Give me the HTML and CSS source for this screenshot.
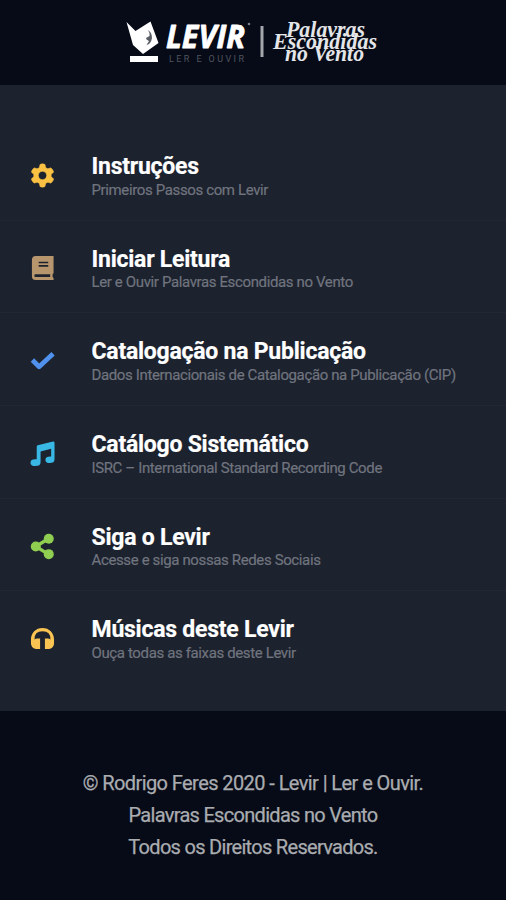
FILE: index.html
```html
<!DOCTYPE html>
<html lang="pt-BR">
<head>
<meta charset="utf-8">
<title>Levir – Palavras Escondidas no Vento</title>
<link rel="stylesheet" href="styles.css">
</head>
<body>
<header class="header">
  <svg class="brand" width="254" height="48" viewBox="126 18 254 48">
    <path fill="#fff" d="M126.500 22L135.500 31L150.500 21.500L158.500 43L143 54L133 45Z"/>
    <path d="M147.500 30Q152 32 152 38Q151 44 146.500 45L149 41Q146 40 146 38L149.500 36Q150 32 147.500 30Z" fill="#5a5e66"/>
    <path fill="#fff" d="M130 56H158V62H130Z"/>
    <text class="brand-name" x="166" y="48" textLength="79" lengthAdjust="spacingAndGlyphs">LEVIR</text>
    <circle cx="249" cy="24" r="1.300" fill="#777b83"/>
    <text class="brand-tag" x="169" y="61.500" textLength="75">LER E OUVIR</text>
    <path fill="#a5a7ac" d="M260.500 26H263.500V57H260.500Z"/>
    <g class="book-title">
      <text x="286" y="37" textLength="79" lengthAdjust="spacingAndGlyphs">Palavras</text>
      <text x="273" y="49" textLength="104" lengthAdjust="spacingAndGlyphs">Escondidas</text>
      <text x="285" y="61" textLength="79" lengthAdjust="spacingAndGlyphs">no Vento</text>
    </g>
  </svg>
</header>
<main class="menu">
  <a class="item">
    <svg class="icon gear" viewBox="0 0 26 26"><path fill-rule="evenodd" d="M10.500 1.500Q13 .3 15.500 1.500L16.200 4.800L18.500 6.100L21.700 5.100Q24.200 6.900 24.500 9.500L22 11.700V14.300L24.500 16.500Q24.200 19.100 21.700 20.900L18.500 19.900L16.200 21.200L15.500 24.500Q13 25.700 10.500 24.500L9.800 21.200L7.500 19.900L4.300 20.900Q1.800 19.100 1.500 16.500L4 14.300V11.700L1.500 9.500Q1.800 6.900 4.300 5.100L7.500 6.100L9.800 4.800ZM13 8.600a4.400 4.400 0 1 0 0 8.800a4.400 4.400 0 1 0 0-8.800Z"/></svg>
    <div><h2>Instruções</h2><p>Primeiros Passos com Levir</p></div>
  </a>
  <a class="item">
    <svg class="icon book" viewBox="0 0 26 26"><path fill-rule="evenodd" d="M6 1H24.500V19L23.500 20V23L24.500 24V26H6Q2 26 2 22V5Q2 1 6 1ZM9 7V8.700H19V7ZM9 10.500V12.200H19V10.500ZM6 20Q4.500 20 4.500 21.500T6 23H21V20Z"/></svg>
    <div><h2>Iniciar Leitura</h2><p>Ler e Ouvir Palavras Escondidas no Vento</p></div>
  </a>
  <a class="item">
    <svg class="icon check" viewBox="0 0 26 26"><path d="M2.500 12.500L9.500 19.500L24 6"/></svg>
    <div><h2>Catalogação na Publicação</h2><p>Dados Internacionais de Catalogação na Publicação (CIP)</p></div>
  </a>
  <a class="item">
    <svg class="icon music" viewBox="0 0 26 26"><path d="M8 4.500L24 .5Q25.500 .2 25.500 2V19Q25.500 23 20.500 23Q16 23 16 19.500T21 16H22V8L11 11V22Q11 26 5.500 26Q.5 26 .5 22.500T5.500 19H7V6Q7 4.800 8 4.500Z"/></svg>
    <div><h2>Catálogo Sistemático</h2><p>ISRC – International Standard Recording Code</p></div>
  </a>
  <a class="item">
    <svg class="icon share" viewBox="0 0 26 26"><path d="M19 6L6 14L19 22"/><circle cx="6" cy="14" r="5.200"/><circle cx="19.500" cy="6" r="5.200"/><circle cx="19.500" cy="22" r="5.200"/></svg>
    <div><h2>Siga o Levir</h2><p>Acesse e siga nossas Redes Sociais</p></div>
  </a>
  <a class="item">
    <svg class="icon phones" viewBox="0 0 26 26"><path d="M13 2C6 2 1 7 1 14V18Q1 23 6 24H10.500V13H7.500Q6 13 4.700 14Q4.500 5.500 13 5.500T21.300 14Q20 13 18.500 13H15.500V24H20Q25 23 25 18V14C25 7 20 2 13 2Z"/></svg>
    <div><h2>Músicas deste Levir</h2><p>Ouça todas as faixas deste Levir</p></div>
  </a>
</main>
<footer class="footer">
  <p>© Rodrigo Feres 2020 - Levir | Ler e Ouvir.</p>
  <p class="tight">Palavras Escondidas no Vento</p>
  <p class="tight">Todos os Direitos Reservados.</p>
</footer>
</body>
</html>
```
FILE: styles.css
```css
* { box-sizing: border-box; }
body {
  margin: 0;
  height: 900px;
  display: flex;
  flex-direction: column;
  background: #060b17;
  font-family: Roboto, "Liberation Sans", sans-serif;
}
h2, p { margin: 0; white-space: nowrap; }
.header {
  height: 85px;
  padding: 18px 0 0 126px;
}
.brand { display: block; overflow: visible; }
.brand-name {
  font: italic 700 32px "Open Sans", sans-serif;
  fill: #fff;
  stroke: #fff;
  stroke-width: .8px;
  stroke-linejoin: round;
}
.brand-tag { font: 9px Roboto, sans-serif; fill: #50545e; }
.book-title {
  font: italic 700 23px "Liberation Serif", serif;
  fill: #e4e5e8;
}
.menu {
  height: 626px;
  padding-top: 43px;
  background: #1c222e;
}
.item {
  height: 92.7px;
  display: grid;
  grid-template-columns: 26px 1fr;
  column-gap: 35.5px;
  align-items: start;
  padding: 25px 30px 0;
  border-bottom: 1px solid #222733;
}
.item:last-child { border-bottom: 0; }
.icon { width: 25px; height: 25px; margin-top: 9.500px; overflow: visible; }
.gear { fill: #fbc143; stroke: #fbc143; stroke-width: .7; }
.book { fill: #b7966e; }
.check { fill: none; stroke: #4f91ec; stroke-width: 5; stroke-linejoin: round; }
.music { fill: #39b7e5; }
.share { fill: #8fce50; }
.share path { fill: none; stroke: #8fce50; stroke-width: 3.5; }
.phones { fill: #f9c452; }
.item h2 {
  font-size: 23px;
  font-weight: 700;
  line-height: 28px;
  letter-spacing: -.24px;
  color: #fff;
  -webkit-text-stroke: .2px #fff;
}
.item p {
  font-size: 15px;
  line-height: 18px;
  letter-spacing: -.37px;
  margin-top: -.5px;
  color: #70747e;
  -webkit-text-stroke: .2px #70747e;
}
.footer {
  height: 189px;
  padding-top: 56px;
  text-align: center;
}
.footer p {
  font-size: 20px;
  line-height: 32px;
  letter-spacing: -.58px;
  color: #aaacb0;
  -webkit-text-stroke: .25px #aaacb0;
}
.footer .tight { letter-spacing: -.7px; }
```
